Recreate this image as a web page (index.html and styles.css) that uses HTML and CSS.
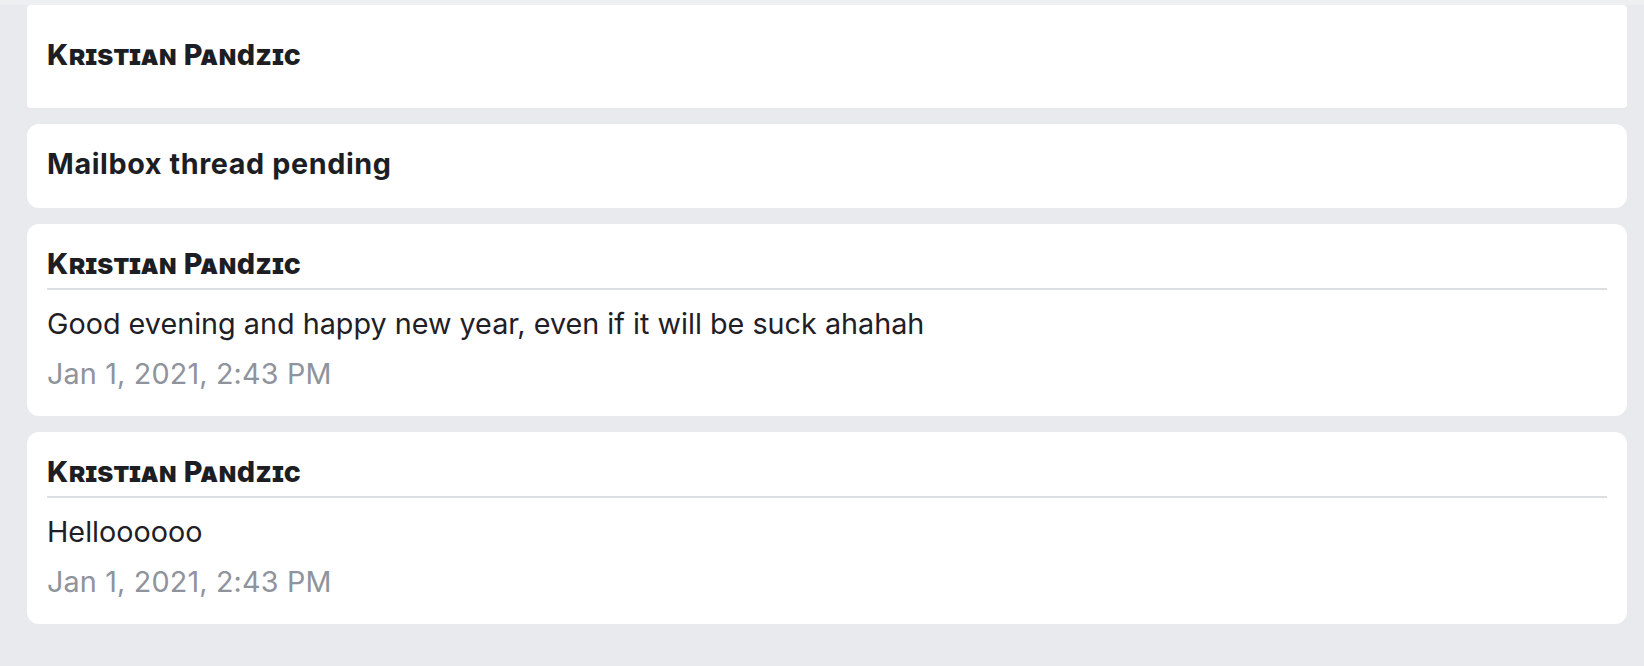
FILE: index.html
```html
<!DOCTYPE html>
<html lang="en">
<head>
<meta charset="utf-8">
<title>Mailbox thread</title>
<link rel="stylesheet" href="styles.css">
</head>
<body>
<div class="page">
  <div class="topline"></div>
  <div class="thread">
    <section class="card card-head">
      <h2 class="name">Kristian Pandzic</h2>
    </section>
    <section class="card card-status">
      <h3 class="status">Mailbox thread pending</h3>
    </section>
    <article class="card message">
      <h4 class="name name-rule">Kristian Pandzic</h4>
      <p class="body">Good evening and happy new year, even if it will be suck ahahah</p>
      <time class="stamp">Jan 1, 2021, 2:43 PM</time>
    </article>
    <article class="card message">
      <h4 class="name name-rule">Kristian Pandzic</h4>
      <p class="body">Helloooooo</p>
      <time class="stamp">Jan 1, 2021, 2:43 PM</time>
    </article>
  </div>
</div>
</body>
</html>
```

FILE: styles.css
```css
* { box-sizing: border-box; }
html, body {
  margin: 0;
  padding: 0;
  background: #e9eaee;
  height: 100%;
}
body {
  font-family: Inter, "Noto Sans", "Liberation Sans", sans-serif;
  color: #1e1f25;
  font-size: 28.75px;
}
.page {
  display: flex;
  flex-direction: column;
}
.topline {
  height: 5px;
  background: #eeeff1;
}
.thread {
  display: flex;
  flex-direction: column;
  gap: 16px;
  padding: 0 17px 0 27px;
}
.card {
  background: #ffffff;
  border-radius: 12px;
  padding: 22px 20px 24px;
  display: flex;
  flex-direction: column;
}
.card-head {
  border-radius: 4px;
  padding: 32px 20px 35px;
}
.card-status {
  padding: 22px 20px 26px;
}
.name {
  margin: 0;
  font-size: 28.75px;
  line-height: 36px;
  font-weight: 800;
  font-variant: small-caps;
  letter-spacing: 0.2px;
  color: #1d1e23;
}
.name-rule {
  padding-bottom: 6px;
  border-bottom: 2px solid #dddee2;
}
.status {
  margin: 0;
  font-size: 28.75px;
  line-height: 36px;
  font-weight: 700;
  letter-spacing: 0.6px;
  color: #1d1e23;
}
.body {
  margin: 16px 0 0;
  font-size: 28.75px;
  line-height: 36px;
  font-weight: 400;
  color: #1f2026;
}
.stamp {
  display: block;
  margin-top: 14px;
  font-size: 28.75px;
  line-height: 36px;
  letter-spacing: 0.15px;
  color: #8e939c;
}
```
